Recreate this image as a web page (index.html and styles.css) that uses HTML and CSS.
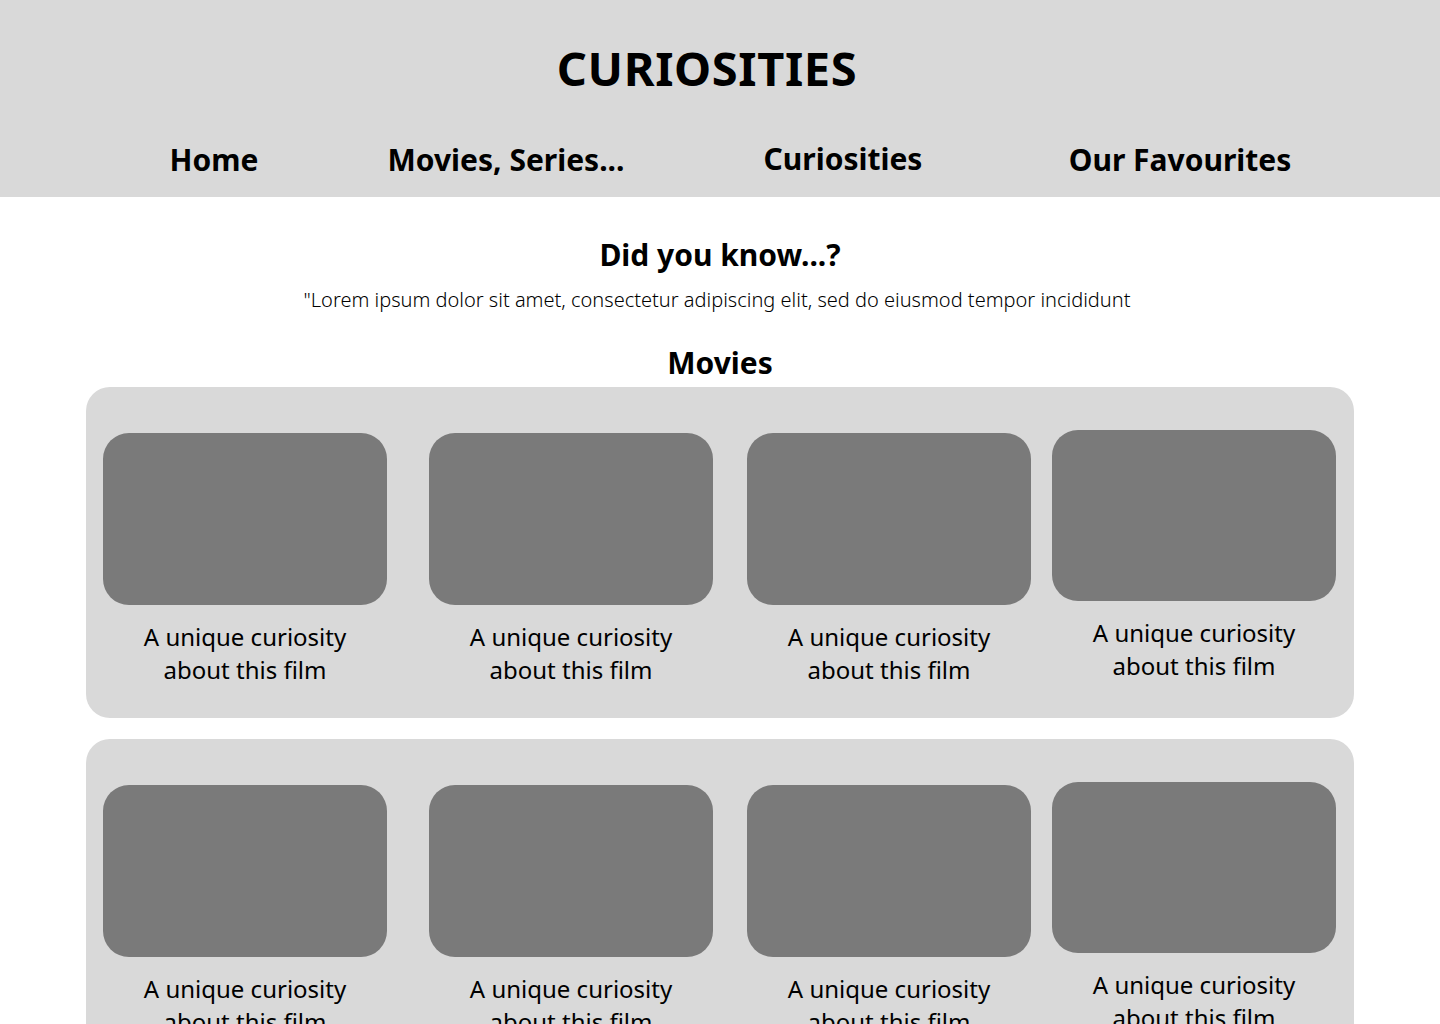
FILE: index.html
```html
<!DOCTYPE html>
<html lang="en">
<head>
<meta charset="utf-8">
<title>Curiosities</title>
<link rel="stylesheet" href="styles.css">
</head>
<body>
<header class="site-header">
  <h1 class="site-title">CURIOSITIES</h1>
  <nav class="main-nav">
    <a class="nav-link" href="#">Home</a>
    <a class="nav-link" href="#">Movies, Series...</a>
    <a class="nav-link nav-link--raised" href="#">Curiosities</a>
    <a class="nav-link" href="#">Our Favourites</a>
  </nav>
</header>
<main class="content">
  <section class="intro">
    <h2 class="intro-title">Did you know...?</h2>
    <p class="intro-text">"Lorem ipsum dolor sit amet, consectetur adipiscing elit, sed do eiusmod tempor incididunt</p>
  </section>
  <h2 class="section-title">Movies</h2>
  <section class="panel">
    <div class="card"><div class="card-image"></div><p class="card-caption">A unique curiosity<br>about this film</p></div>
    <div class="card card--2"><div class="card-image"></div><p class="card-caption">A unique curiosity<br>about this film</p></div>
    <div class="card card--3"><div class="card-image"></div><p class="card-caption">A unique curiosity<br>about this film</p></div>
    <div class="card card--4"><div class="card-image"></div><p class="card-caption">A unique curiosity<br>about this film</p></div>
  </section>
  <section class="panel">
    <div class="card"><div class="card-image"></div><p class="card-caption">A unique curiosity<br>about this film</p></div>
    <div class="card card--2"><div class="card-image"></div><p class="card-caption">A unique curiosity<br>about this film</p></div>
    <div class="card card--3"><div class="card-image"></div><p class="card-caption">A unique curiosity<br>about this film</p></div>
    <div class="card card--4"><div class="card-image"></div><p class="card-caption">A unique curiosity<br>about this film</p></div>
  </section>
</main>
</body>
</html>
```
FILE: styles.css
```css
* { box-sizing: border-box; }
html, body { margin: 0; padding: 0; }
body {
  font-family: "Noto Sans", "Open Sans", sans-serif;
  color: #000;
  background: #fff;
  overflow: hidden;
}
.site-header {
  background: #d9d9d9;
  height: 197px;
  padding-top: 32px;
}
.site-title {
  margin: 0;
  padding-right: 26px;
  text-align: center;
  font-size: 47px;
  font-weight: 700;
  line-height: 72px;
  letter-spacing: 0.6px;
}
.main-nav {
  display: grid;
  grid-template-columns: 228px 356px 318px 356px;
  margin: 34px 0 0 100px;
}
.nav-link {
  text-align: center;
  color: #000;
  text-decoration: none;
  font-size: 30px;
  font-weight: 700;
  line-height: 44px;
}
.nav-link--raised { margin-top: -1px; }
.content { padding: 0 86px; }
.intro { text-align: center; padding-top: 36px; }
.intro-title {
  margin: 0;
  font-size: 30px;
  font-weight: 700;
  line-height: 44px;
}
.intro-text {
  margin: 8px 0 0;
  padding-right: 6px;
  font-size: 20px;
  font-weight: 300;
  line-height: 30px;
}
.section-title {
  margin: 28px 0 4px;
  text-align: center;
  font-size: 30px;
  font-weight: 700;
  line-height: 40px;
}
.panel {
  display: flex;
  align-items: flex-start;
  background: #d9d9d9;
  border-radius: 24px;
  padding: 46px 17px 32px;
  margin-bottom: 21px;
}
.card { width: 284px; flex: none; }
.card--2 { margin-left: 42px; }
.card--3 { margin-left: 34px; }
.card--4 { margin-left: 21px; margin-top: -3px; }
.card-image {
  height: 172px;
  background: #7a7a7a;
  border-radius: 26px;
}
.card--4 .card-image { height: 171px; }
.card-caption {
  margin: 15px 0 0;
  text-align: center;
  font-size: 24px;
  line-height: 33px;
}
```
